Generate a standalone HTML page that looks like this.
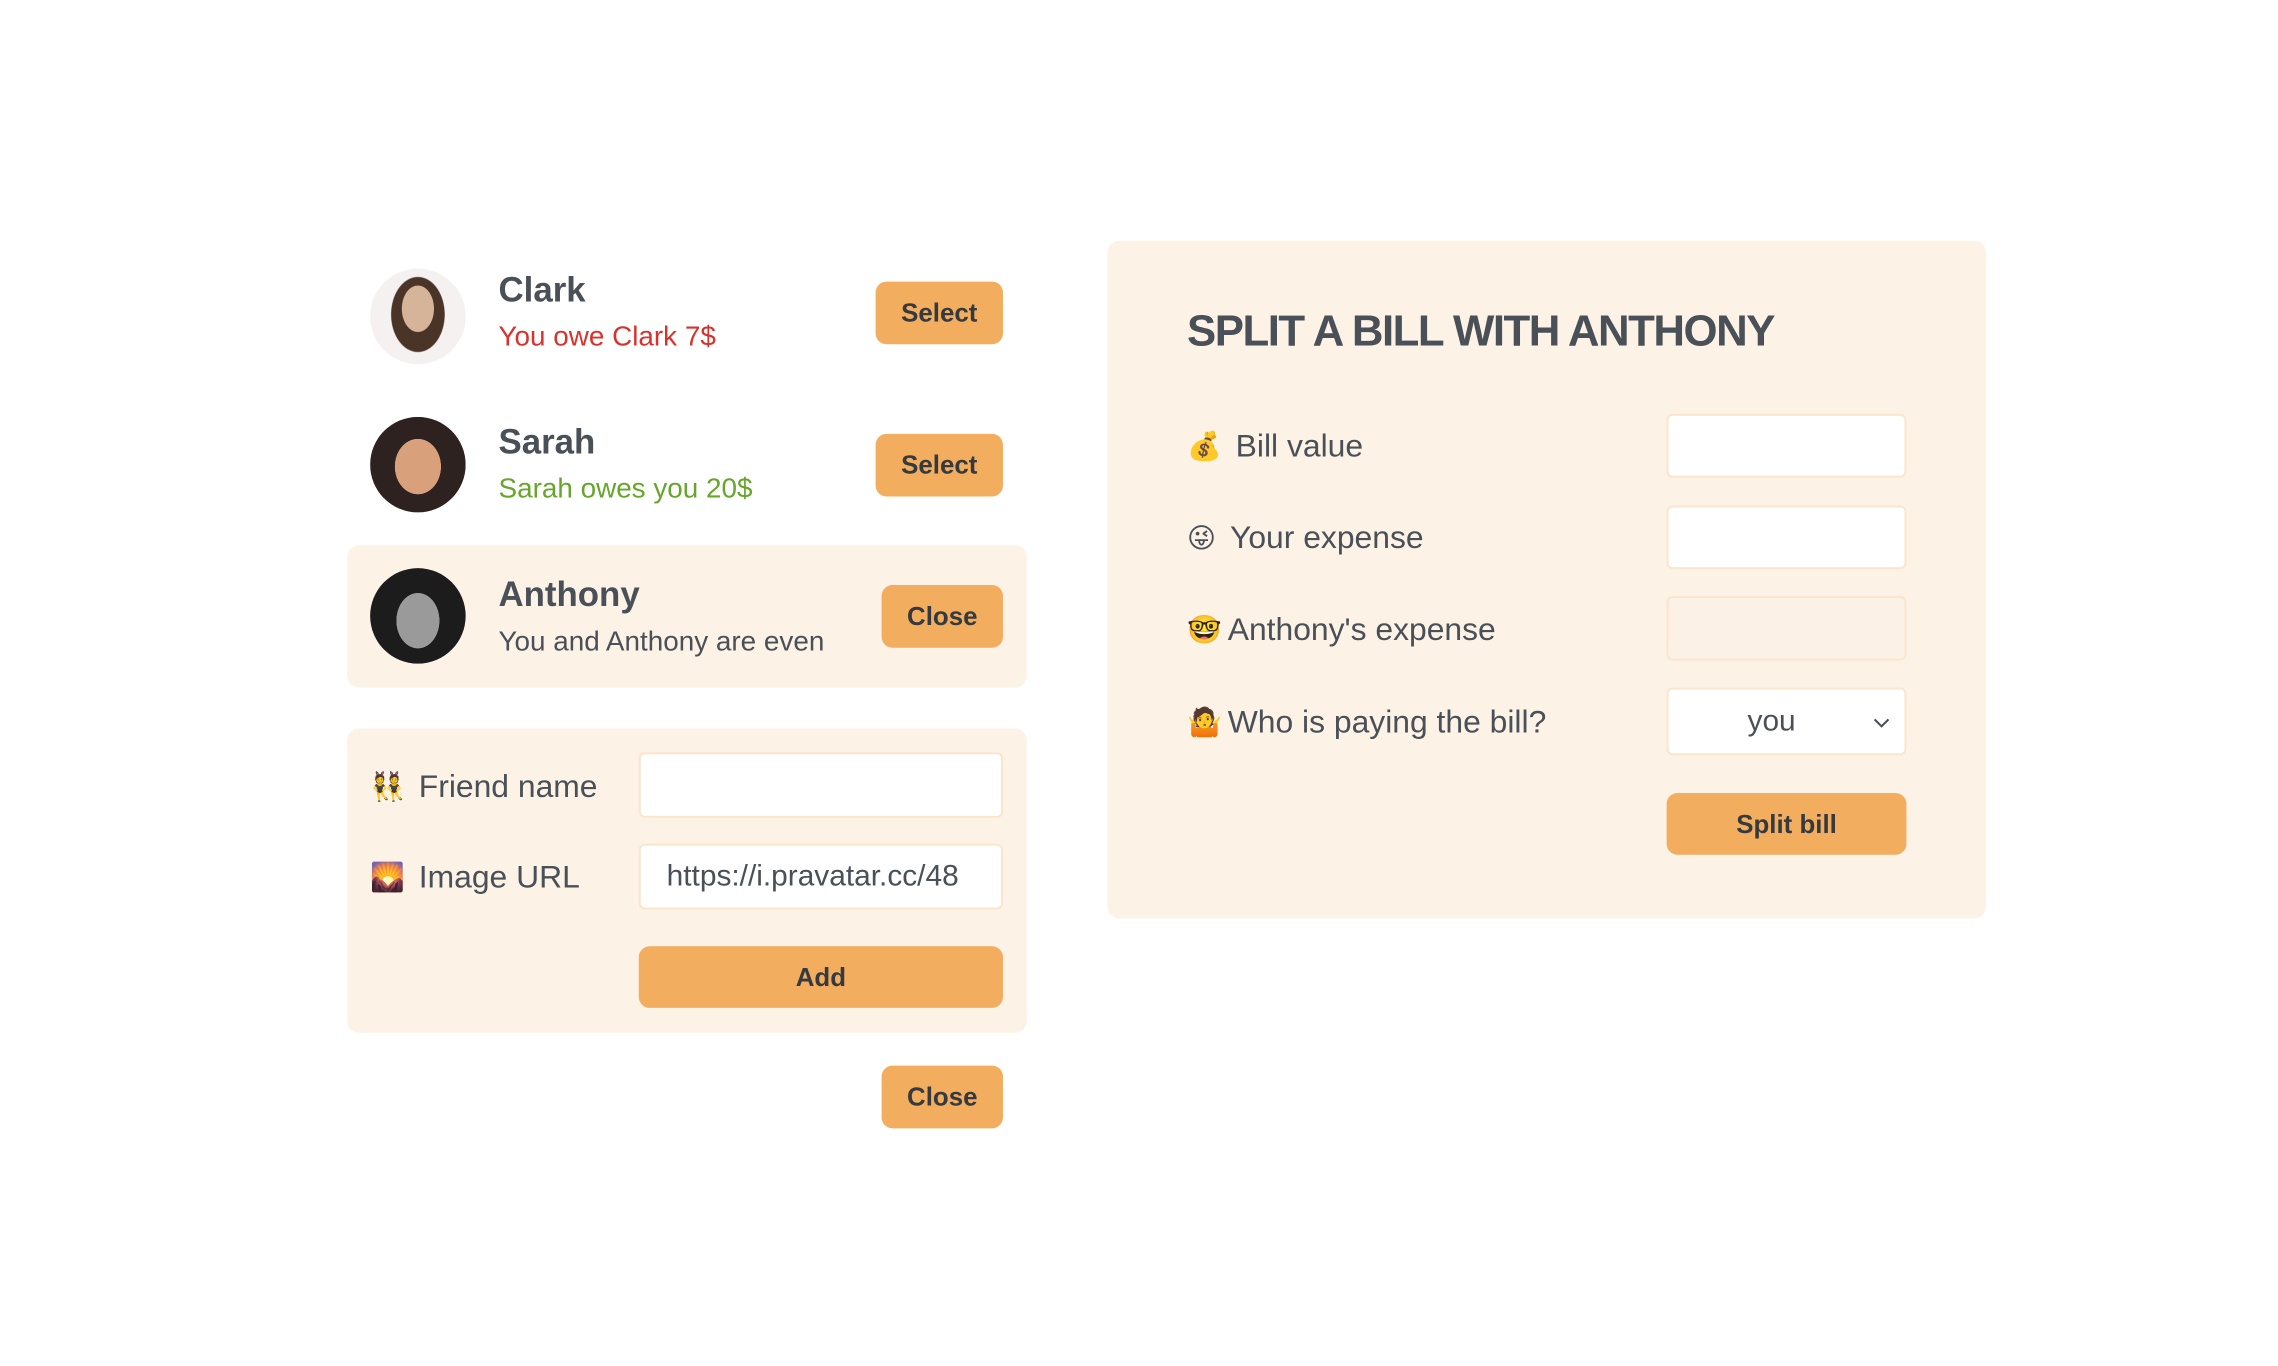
<!DOCTYPE html>
<html><head><meta charset="utf-8"><style>
*{box-sizing:border-box;margin:0;padding:0}
body{width:2278px;height:1366px;background:#fff;font-family:"Liberation Sans","Noto Sans CJK JP",sans-serif;color:#495057;position:relative;overflow:hidden}
#w{position:absolute;left:0;top:0;width:2278px;height:1366px;transform:scale(0.995);transform-origin:0 0}
.a{position:absolute}
.av{position:absolute;width:96px;height:96px;border-radius:50%}
.name{position:absolute;font-weight:bold;font-size:35px}
.sub{position:absolute;font-size:28px}
.btn{position:absolute;background:#f2ad5e;border-radius:11px;font-weight:bold;font-size:26px;color:#343a40;display:flex;align-items:center;justify-content:center}
.panel{position:absolute;background:#fdf2e6;border-radius:12px}
.inp{position:absolute;background:#fff;border:2px solid #fbe6cc;border-radius:6px;font-size:30px;display:flex;align-items:center}
.lbl{position:absolute;font-size:32px;display:flex;align-items:center;gap:14px}
.em{font-family:"DejaVu Sans",sans-serif;font-size:28px}
</style></head><body><div id="w">
<div class="av" style="left:372px;top:270px;background:radial-gradient(ellipse 18% 26% at 50% 42%,#d6b49a 0 92%,transparent 95%),radial-gradient(ellipse 30% 42% at 50% 48%,#4a3428 0 92%,transparent 95%),#f4f1f0"></div>
<div class="name" style="left:501px;top:272px">Clark</div>
<div class="sub" style="left:501px;top:322px;color:#d9322c">You owe Clark 7$</div>
<div class="btn" style="left:880px;top:283px;width:128px;height:63px">Select</div>

<div class="av" style="left:372px;top:419px;background:radial-gradient(ellipse 30% 36% at 50% 52%,#d9a07c 0 80%,#2e2220 81%),#7a5a55"></div>
<div class="name" style="left:501px;top:425px">Sarah</div>
<div class="sub" style="left:501px;top:475px;color:#66a62b">Sarah owes you 20$</div>
<div class="btn" style="left:880px;top:436px;width:128px;height:63px">Select</div>

<div class="panel" style="left:349px;top:548px;width:683px;height:143px"></div>
<div class="av" style="left:372px;top:571px;background:radial-gradient(ellipse 28% 36% at 50% 55%,#9a9a9a 0 80%,#1c1c1c 81%)"></div>
<div class="name" style="left:501px;top:578px">Anthony</div>
<div class="sub" style="left:501px;top:629px">You and Anthony are even</div>
<div class="btn" style="left:886px;top:588px;width:122px;height:63px">Close</div>

<div class="panel" style="left:349px;top:732px;width:683px;height:306px"></div>
<div class="lbl" style="left:372px;top:766px;height:48px"><span class="em">👯</span>Friend name</div>
<div class="inp" style="left:642px;top:756px;width:366px;height:66px"></div>
<div class="lbl" style="left:372px;top:857px;height:48px"><span class="em">🌄</span>Image URL</div>
<div class="inp" style="left:642px;top:848px;width:366px;height:66px;padding-left:26px">https://i.pravatar.cc/48</div>
<div class="btn" style="left:642px;top:951px;width:366px;height:62px">Add</div>
<div class="btn" style="left:886px;top:1071px;width:122px;height:63px">Close</div>

<div class="panel" style="left:1113px;top:242px;width:883px;height:681px"></div>
<div class="a" style="left:1193px;top:308px;font-size:44px;font-weight:bold;letter-spacing:-1.5px">SPLIT A BILL WITH ANTHONY</div>
<div class="lbl" style="left:1193px;top:424px;height:48px"><span class="em">💰</span>Bill value</div>
<div class="inp" style="left:1675px;top:416px;width:241px;height:64px"></div>
<div class="lbl" style="left:1193px;top:516px;height:48px"><span class="em">😜</span>Your expense</div>
<div class="inp" style="left:1675px;top:508px;width:241px;height:64px"></div>
<div class="lbl" style="left:1193px;top:608px;height:48px;gap:6px"><span class="em">🤓</span>Anthony's expense</div>
<div class="inp" style="left:1675px;top:599px;width:241px;height:65px;background:#fbf1e7"></div>
<div class="lbl" style="left:1193px;top:701px;height:48px;gap:6px"><span class="em">🤷</span>Who is paying the bill?</div>
<div class="inp" style="left:1675px;top:691px;width:241px;height:68px;justify-content:center;padding-right:30px">you<svg class="a" style="right:14px;top:28px" width="18" height="12" viewBox="0 0 18 12"><path d="M2 2l7 7 7-7" fill="none" stroke="#495057" stroke-width="2"/></svg></div>
<div class="btn" style="left:1675px;top:797px;width:241px;height:62px">Split bill</div>
</div></body></html>
